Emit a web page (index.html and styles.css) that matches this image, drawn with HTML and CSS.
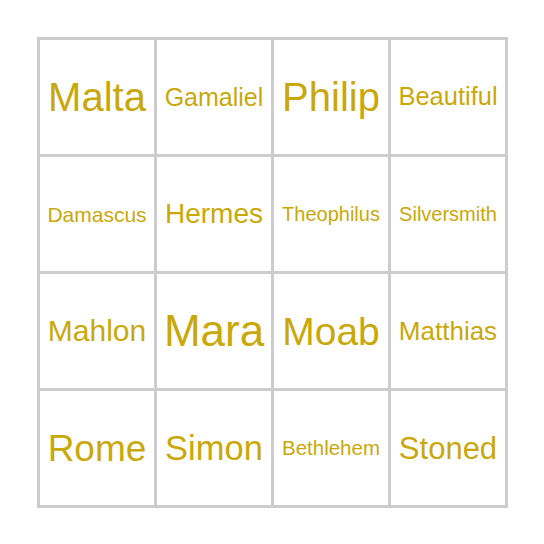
FILE: index.html
```html
<!DOCTYPE html>
<html>
<head>
<meta charset="utf-8">
<link rel="stylesheet" href="styles.css">
</head>
<body>
<div class="board">
  <div class="cell"><span class="s40">Malta</span></div>
  <div class="cell"><span class="s25">Gamaliel</span></div>
  <div class="cell"><span class="s40">Philip</span></div>
  <div class="cell"><span class="s25b">Beautiful</span></div>
  <div class="cell"><span class="s21">Damascus</span></div>
  <div class="cell"><span class="s28">Hermes</span></div>
  <div class="cell"><span class="s20">Theophilus</span></div>
  <div class="cell"><span class="s20">Silversmith</span></div>
  <div class="cell"><span class="s30">Mahlon</span></div>
  <div class="cell"><span class="s44">Mara</span></div>
  <div class="cell"><span class="s39">Moab</span></div>
  <div class="cell"><span class="s26">Matthias</span></div>
  <div class="cell"><span class="s37">Rome</span></div>
  <div class="cell"><span class="s34">Simon</span></div>
  <div class="cell"><span class="s20b">Bethlehem</span></div>
  <div class="cell"><span class="s31">Stoned</span></div>
</div>
</body>
</html>
```
FILE: styles.css
```css
html, body {
  margin: 0;
  padding: 0;
  background: #ffffff;
}
body {
  padding: 37px;
  font-family: "Liberation Sans", Arial, sans-serif;
}
.board {
  display: grid;
  grid-template-columns: repeat(4, 114px);
  grid-template-rows: repeat(4, 114px);
  gap: 3px;
  padding: 3px;
  background: #cccccc;
  width: max-content;
}
.cell {
  background: #ffffff;
  display: flex;
  align-items: center;
  justify-content: center;
  color: #c8a80a;
  white-space: nowrap;
  line-height: 1;
}
.s20 { font-size: 20px; }
.s20b { font-size: 20.5px; }
.s21 { font-size: 21px; }
.s25 { font-size: 25px; }
.s25b { font-size: 25.5px; }
.s26 { font-size: 26px; }
.s28 { font-size: 28px; }
.s30 { font-size: 30px; }
.s31 { font-size: 31px; }
.s34 { font-size: 34.5px; }
.s37 { font-size: 37px; }
.s39 { font-size: 39px; }
.s40 { font-size: 40px; }
.s44 { font-size: 44px; }
```
